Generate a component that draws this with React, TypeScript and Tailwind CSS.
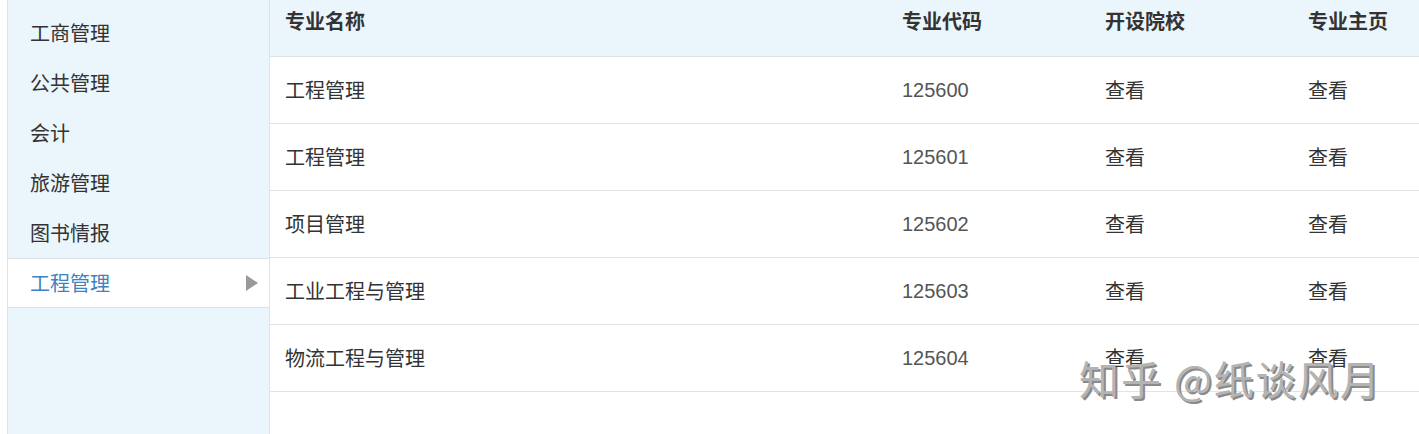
import React from 'react';

const menu = ['工商管理', '公共管理', '会计', '旅游管理', '图书情报', '工程管理'];

const rows = [
  { name: '工程管理', code: '125600' },
  { name: '工程管理', code: '125601' },
  { name: '项目管理', code: '125602' },
  { name: '工业工程与管理', code: '125603' },
  { name: '物流工程与管理', code: '125604' },
];

const font = "font-['Microsoft_YaHei','Noto_Sans_CJK_SC',sans-serif]";

export default function App() {
  return (
    <div className={`relative flex h-[434px] w-[1419px] overflow-hidden bg-white ${font}`}>
      {/* Sidebar */}
      <div className="ml-[7px] flex w-[263px] shrink-0 flex-col border-x border-[#dde3e8] bg-[#eaf5fc] pt-[8px]">
        {menu.map((m, i) => {
          const active = i === menu.length - 1;
          return (
            <div
              key={m}
              className={
                active
                  ? 'flex h-[50px] items-center justify-between border-y border-[#dde3e8] bg-white pl-[22px] pr-[10px] text-[20px] text-[#3f82bd]'
                  : 'flex h-[50px] items-center pl-[22px] text-[20px] text-[#333]'
              }
            >
              <span>{m}</span>
              {active && (
                <svg width="14" height="16" viewBox="0 0 14 16">
                  <path d="M1 0 L13 8 L1 16 Z" fill="#999" />
                </svg>
              )}
            </div>
          );
        })}
      </div>

      {/* Table */}
      <div className="flex flex-1 flex-col">
        <div className="grid h-[57px] grid-cols-[617px_203px_203px_1fr] items-center border-b border-[#dde3e8] bg-[#eaf5fc] pl-[15px] pb-[14px] text-[20px] font-bold text-[#333]">
          <div>专业名称</div>
          <div>专业代码</div>
          <div>开设院校</div>
          <div>专业主页</div>
        </div>
        {rows.map((r) => (
          <div
            key={r.code}
            className="grid h-[67px] grid-cols-[617px_203px_203px_1fr] items-center border-b border-[#e3e3e3] pl-[15px] text-[20px] text-[#333]"
          >
            <div>{r.name}</div>
            <div className="font-['Liberation_Sans',Arial,sans-serif] text-[#555]">{r.code}</div>
            <div>查看</div>
            <div>查看</div>
          </div>
        ))}
      </div>

      {/* Watermark */}
      <div className="pointer-events-none absolute left-[1079px] top-[348px] text-[40px] tracking-[2px] text-[#b4b4b4] [text-shadow:2px_2px_0_#8a8a8a]">
        知乎 @纸谈风月
      </div>
    </div>
  );
}
